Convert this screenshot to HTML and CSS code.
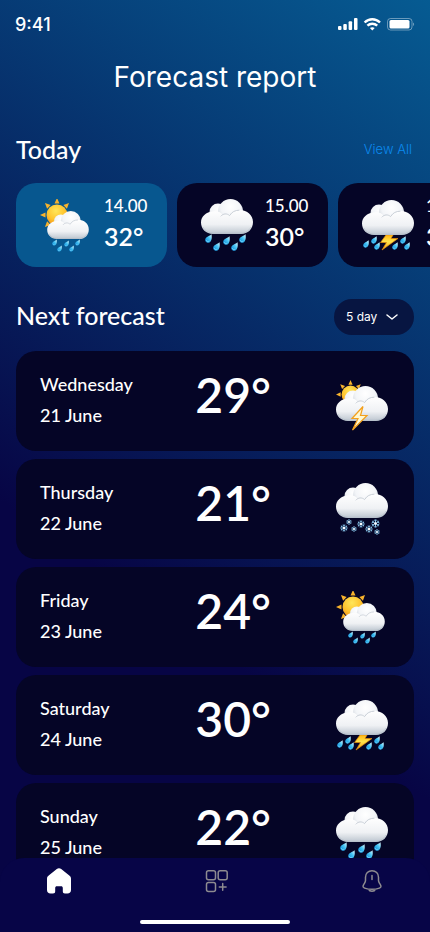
FILE: index.html
```html
<!DOCTYPE html>
<html lang="en">
<head>
<meta charset="utf-8">
<meta name="viewport" content="width=device-width, initial-scale=1">
<title>Forecast report</title>
<link rel="stylesheet" href="styles.css">
</head>
<body>
<svg class="defs" aria-hidden="true">
  <defs>
    <radialGradient id="puff" cx=".5" cy=".3" r=".72">
      <stop offset="0" stop-color="#ffffff"/>
      <stop offset=".55" stop-color="#f3f5f8"/>
      <stop offset="1" stop-color="#c5ccd5"/>
    </radialGradient>
    <linearGradient id="base" x1="0" y1="0" x2="0" y2="1">
      <stop offset="0" stop-color="#ffffff"/>
      <stop offset=".6" stop-color="#eff1f4"/>
      <stop offset="1" stop-color="#bcc5cf"/>
    </linearGradient>
    <linearGradient id="water" x1="1" y1="0" x2="0" y2="1">
      <stop offset="0" stop-color="#e4fbff"/>
      <stop offset=".45" stop-color="#45c3f4"/>
      <stop offset="1" stop-color="#0682d2"/>
    </linearGradient>
    <radialGradient id="sunfill" cx=".45" cy=".3" r=".7">
      <stop offset="0" stop-color="#ffe65a"/>
      <stop offset=".6" stop-color="#ffc42e"/>
      <stop offset="1" stop-color="#f1941d"/>
    </radialGradient>
    <linearGradient id="flash" x1="0" y1="0" x2="0" y2="1">
      <stop offset="0" stop-color="#ffb511"/>
      <stop offset=".45" stop-color="#ffe44b"/>
      <stop offset="1" stop-color="#f39a12"/>
    </linearGradient>
    <symbol id="cloud" viewBox="0 0 52 35">
      <circle cx="17" cy="13" r="8.5" fill="url(#puff)"/>
      <circle cx="29.500" cy="12.500" r="12.500" fill="url(#puff)"/>
      <path d="M12 12.500C16 11.500 20 13 22 16C25 14 28 15 29 16C31 12.500 35 11 39 11C46 11 52 16 52 23C52 30 47 35 40 35H12C5 35 0 30 0 23.500C0 17.500 5 13 12 12.500Z" fill="url(#base)"/>
      <path d="M20 17C22 14.500 26 14 28.500 16.500M29 16C31 12.800 34 11.300 38 11.200" fill="none" stroke="#c3cad2" stroke-width=".9" stroke-linecap="round"/>
      <path d="M2 28C4 32 8 34.300 13 34.300H39C44 34.300 48 32 50 28" fill="none" stroke="#a9b5c1" stroke-width=".8" opacity=".6"/>
    </symbol>
    <symbol id="drop" viewBox="0 0 7 9">
      <path d="M6.500 .2C6.900 3 7 5.300 5.700 7.200C4.600 8.900 2.300 9.300 1 8C-.3 6.700 0 4.600 1.700 3.300C3.300 2.100 5 1.600 6.500 .2Z" fill="url(#water)"/>
      <path d="M1.300 6.300C1.500 7.500 2.700 8 3.700 7.500" fill="none" stroke="#8ee3ff" stroke-width=".8"/>
    </symbol>
    <symbol id="sun" viewBox="0 0 34 34">
      <g fill="#f8b32c">
        <path id="ray" d="M17 0L19.500 5.500H14.500Z"/>
        <use href="#ray" transform="rotate(45 17 17)"/>
        <use href="#ray" transform="rotate(-45 17 17)"/>
        <use href="#ray" transform="rotate(-90 17 17)"/>
        <use href="#ray" transform="rotate(-135 17 17)"/>
      </g>
      <circle cx="17" cy="17" r="10.500" fill="url(#sunfill)"/>
    </symbol>
    <symbol id="flake" viewBox="-5 -5 10 10">
      <path d="M0-4.500V4.500M-3.900-2.200L3.900 2.200M-3.900 2.200L3.900-2.200M-1.500-4L0-2.800L1.500-4M-1.500 4L0 2.800L1.500 4M-4.300-.6L-2.500-1.400L-2.700-3.300M4.300 .6L2.500 1.400L2.700 3.300M-4.300 .6L-2.500 1.400L-2.700 3.300M4.300-.6L2.500-1.400L2.700-3.300" fill="none" stroke="#8fd0f5" stroke-width="1"/>
      <circle r="1.500" fill="#ffffff"/>
    </symbol>
    <symbol id="sun-rain" viewBox="0 0 52 54">
      <use href="#sun" x="0" y="-1" width="34" height="34"/>
      <use href="#cloud" x="7" y="12" width="42" height="28"/>
      <use href="#drop" x="12" y="40" width="5" height="7"/>
      <use href="#drop" x="24" y="41" width="5" height="7"/>
      <use href="#drop" x="35" y="40" width="5" height="7"/>
      <use href="#drop" x="17" y="46" width="5" height="7"/>
      <use href="#drop" x="29" y="46" width="5" height="7"/>
    </symbol>
    <symbol id="rain" viewBox="0 0 52 54">
      <use href="#cloud" width="52" height="35"/>
      <use href="#drop" x="4" y="35" width="7" height="9"/>
      <use href="#drop" x="22" y="37" width="7" height="9"/>
      <use href="#drop" x="38" y="35" width="7" height="9"/>
      <use href="#drop" x="12" y="43" width="7" height="9"/>
      <use href="#drop" x="30" y="43" width="7" height="9"/>
    </symbol>
    <symbol id="storm" viewBox="0 0 52 54">
      <use href="#drop" x="1" y="41" width="6" height="8"/>
      <use href="#drop" x="9" y="37" width="6" height="8"/>
      <use href="#drop" x="12" y="43" width="6" height="8"/>
      <use href="#drop" x="30" y="43" width="6" height="8"/>
      <use href="#drop" x="38" y="37" width="6" height="8"/>
      <use href="#drop" x="42" y="43" width="6" height="8"/>
      <path d="M24 36H31L29 39.500H36L20 51L24.500 43.500H18.500Z" fill="url(#flash)" stroke="#e48b0c" stroke-width=".7"/>
      <use href="#cloud" y="1" width="52" height="35"/>
    </symbol>
    <symbol id="sun-storm" viewBox="0 0 52 56">
      <use href="#sun" x="0" y="5" width="29" height="29"/>
      <use href="#cloud" y="11" width="52" height="35"/>
      <path d="M27 31.500L16 43.500H22L16.500 55L31 40.500H24.500Z" fill="#fff8d2" stroke="#f3a01c" stroke-width="1.200"/>
    </symbol>
    <symbol id="snow" viewBox="0 0 52 54">
      <use href="#cloud" width="52" height="35"/>
      <use href="#flake" x="10" y="36" width="6" height="6"/>
      <use href="#flake" x="21" y="37" width="8" height="8"/>
      <use href="#flake" x="35" y="36" width="9" height="9"/>
      <use href="#flake" x="4" y="41" width="8" height="8"/>
      <use href="#flake" x="15" y="43" width="6" height="6"/>
      <use href="#flake" x="29" y="42" width="8" height="8"/>
      <use href="#flake" x="38" y="46" width="6" height="6"/>
    </symbol>
  </defs>
</svg>

<div class="status">
  <span class="clock">9:41</span>
  <svg class="signals" viewBox="0 0 77 14" aria-hidden="true">
    <g fill="#fff">
      <rect x="0" y="8" width="3.500" height="4" rx="1"/>
      <rect x="5.300" y="6" width="3.500" height="6" rx="1"/>
      <rect x="10.600" y="3.300" width="3.500" height="8.700" rx="1"/>
      <rect x="16" y="0" width="3.500" height="12" rx="1"/>
      <rect x="51.500" y="2" width="20" height="8.500" rx="1.500"/>
      <path d="M34.300 12.500L31.900 10C33.200 8.900 35.400 8.900 36.700 10Z"/>
      <path d="M75 4.500C76.500 5 76.500 7.500 75 8Z" opacity=".4"/>
    </g>
    <g fill="none" stroke="#fff" stroke-width="2.400">
      <path d="M26.600 4.500C31 .2 37.600 .2 42 4.500"/>
      <path d="M29.400 7.700C32.200 5 36.400 5 39.200 7.700"/>
    </g>
    <rect x="49.500" y=".5" width="24.500" height="11.500" rx="3" fill="none" stroke="#fff" opacity=".4"/>
  </svg>
</div>

<main>
  <h1>Forecast report</h1>

  <section>
    <div class="heading">
      <h2>Today</h2>
      <a class="view-all" href="#today">View All</a>
    </div>
    <ul class="hours" id="today">
      <li class="hour current">
        <svg class="weather" viewBox="0 0 52 54" role="img" aria-label="Sun and rain"><use href="#sun-rain"/></svg>
        <div class="reading"><time>14.00</time><strong>32°</strong></div>
      </li>
      <li class="hour">
        <svg class="weather" viewBox="0 0 52 54" role="img" aria-label="Rain"><use href="#rain"/></svg>
        <div class="reading"><time>15.00</time><strong>30°</strong></div>
      </li>
      <li class="hour">
        <svg class="weather" viewBox="0 0 52 54" role="img" aria-label="Thunderstorm"><use href="#storm"/></svg>
        <div class="reading"><time>16.00</time><strong>30°</strong></div>
      </li>
    </ul>
  </section>

  <section class="next">
    <div class="heading">
      <h2>Next forecast</h2>
      <div class="range">
        <select aria-label="Forecast range"><option>5 day</option></select>
        <svg viewBox="0 0 14 8" aria-hidden="true"><path d="M2 2L7 6L12 2"/></svg>
      </div>
    </div>
    <ul class="days">
      <li class="day">
        <div class="date"><span>Wednesday</span><span>21 June</span></div>
        <strong>29°</strong>
        <svg class="weather" viewBox="0 0 52 54" role="img" aria-label="Sun and lightning"><use href="#sun-storm" width="52" height="56"/></svg>
      </li>
      <li class="day">
        <div class="date"><span>Thursday</span><span>22 June</span></div>
        <strong>21°</strong>
        <svg class="weather" viewBox="0 0 52 54" role="img" aria-label="Snow"><use href="#snow"/></svg>
      </li>
      <li class="day">
        <div class="date"><span>Friday</span><span>23 June</span></div>
        <strong>24°</strong>
        <svg class="weather" viewBox="0 0 52 54" role="img" aria-label="Sun and rain"><use href="#sun-rain"/></svg>
      </li>
      <li class="day">
        <div class="date"><span>Saturday</span><span>24 June</span></div>
        <strong>30°</strong>
        <svg class="weather" viewBox="0 0 52 54" role="img" aria-label="Thunderstorm"><use href="#storm"/></svg>
      </li>
      <li class="day">
        <div class="date"><span>Sunday</span><span>25 June</span></div>
        <strong>22°</strong>
        <svg class="weather" viewBox="0 0 52 54" role="img" aria-label="Rain"><use href="#rain"/></svg>
      </li>
    </ul>
  </section>
</main>

<nav class="tabs" aria-label="Main">
  <div class="tab-row">
    <button type="button" aria-label="Home" aria-current="page">
      <svg viewBox="0 0 26 26"><path d="M10.800 1.100C12.100 .1 13.900 .1 15.200 1.100L23.300 7.500C24.400 8.300 25 9.300 25 10.700V22C25 24.200 23.700 25.500 21.500 25.500H19C17.500 25.500 16.800 24.700 16.800 23.300V20.300C16.800 18.900 16.200 18.300 15 18.300H11C9.800 18.300 9.200 18.900 9.200 20.300V23.300C9.200 24.700 8.500 25.500 7 25.500H4.500C2.300 25.500 1 24.200 1 22V10.700C1 9.300 1.600 8.300 2.700 7.500Z" fill="#fff"/></svg>
    </button>
    <button type="button" aria-label="Widgets">
      <svg class="line" viewBox="0 0 26 26"><rect x="3.500" y="2.700" width="9" height="9" rx="2"/><rect x="15.200" y="2.700" width="9" height="9" rx="2"/><rect x="3.500" y="14.400" width="9" height="9" rx="2"/><path d="M19.700 15.500V22.300M16.300 18.900H23.100"/></svg>
    </button>
    <button type="button" aria-label="Notifications">
      <svg class="line" viewBox="0 0 26 26"><path d="M13 7.500V11.500M13 2.700C9.200 2.700 6.500 5.500 6.500 9.300V12.500C6.500 13.600 5.900 14.500 5.300 15.500L4.400 17.200C3.600 18.700 4.200 19.600 5.600 20.100C10.400 21.700 15.600 21.700 20.400 20.100C21.800 19.600 22.400 18.700 21.600 17.200L20.700 15.500C20.100 14.500 19.500 13.600 19.500 12.500V9.300C19.500 5.500 16.800 2.700 13 2.700ZM9.800 21.300C10.500 23.900 15.500 23.900 16.200 21.300"/></svg>
    </button>
  </div>
  <div class="home-bar"></div>
</nav>
</body>
</html>
```
FILE: styles.css
```css
* {
  box-sizing: border-box;
}

body {
  margin: 0;
  min-height: 100vh;
  overflow-x: hidden;
  background: linear-gradient(215deg, #065b92 0%, #070545 65%) fixed;
  color: #fff;
  font-family: Lato, "Liberation Sans", sans-serif;
  font-weight: 500;
}

h1,
h2,
ul {
  margin: 0;
  padding: 0;
  font-weight: inherit;
  list-style: none;
}

strong {
  font-weight: 600;
}

.defs {
  position: absolute;
  width: 0;
  height: 0;
}

.status {
  display: flex;
  align-items: center;
  justify-content: space-between;
  height: 50px;
  padding: 0 15px;
}

.clock {
  font: 500 18px/24px Inter, sans-serif;
}

.signals {
  width: 77px;
  height: 14px;
}

main {
  padding: 0 16px;
}

h1 {
  padding-top: 7px;
  font: 400 28px/40px Inter, sans-serif;
  font-optical-sizing: none;
  text-align: center;
}

section {
  padding-top: 32px;
}

.heading {
  display: flex;
  align-items: center;
  justify-content: space-between;
  height: 40px;
}

.next .heading {
  align-items: start;
  height: 36px;
}

h2 {
  font-size: 25px;
  line-height: 32px;
}

.view-all {
  padding: 0 2px;
  color: #0b8aee;
  font: 300 13px/20px Inter, sans-serif;
  text-decoration: none;
}

.hours {
  display: flex;
  gap: 10px;
  margin: 14px -16px 0 0;
  overflow: hidden;
}

.hour {
  display: flex;
  flex: 0 0 151px;
  gap: 12px;
  height: 84px;
  padding: 16px 0 0 24px;
  border-radius: 20px;
  background: #050526;
}

.current {
  background: #07578f;
}

.weather {
  flex: none;
  width: 52px;
  height: 54px;
  overflow: visible;
}

.reading {
  display: grid;
  align-content: start;
}

.reading time {
  font-size: 17px;
  line-height: 14px;
}

.reading strong {
  font-size: 25px;
  line-height: 46px;
}

.range {
  display: grid;
  align-items: center;
  width: 80px;
}

.range select,
.range svg {
  grid-area: 1 / 1;
}

.range select {
  width: 100%;
  height: 36px;
  padding: 0 12px;
  border: 0;
  border-radius: 18px;
  appearance: none;
  background: #071541;
  color: #fff;
  font: 400 12px/16px Inter, sans-serif;
}

.range svg {
  justify-self: end;
  width: 14px;
  height: 8px;
  margin-right: 15px;
  fill: none;
  stroke: #fff;
  stroke-width: 1.5;
  stroke-linecap: round;
  stroke-linejoin: round;
  pointer-events: none;
}

.days {
  display: grid;
  gap: 8px;
  margin-top: 16px;
}

.day {
  display: grid;
  grid-template-columns: 4fr 80px 3fr;
  height: 100px;
  padding: 0 26px 0 24px;
  border-radius: 20px;
  background: #050526;
}

.date {
  display: grid;
  align-content: start;
  padding-top: 18px;
  font-size: 18px;
  line-height: 31px;
}

.day > strong {
  font-size: 48px;
  line-height: 88px;
  text-align: center;
}

.day .weather {
  justify-self: end;
  margin-top: 24px;
}

.tabs {
  position: fixed;
  inset: auto 0 0;
  height: 74px;
  border-radius: 24px 24px 0 0;
  background: #070547;
}

.tab-row {
  display: flex;
  justify-content: space-between;
  padding: 10px 45px 0 46px;
}

.tabs button {
  width: 26px;
  height: 26px;
  padding: 0;
  border: 0;
  background: none;
}

.tabs svg {
  display: block;
  width: 26px;
  height: 26px;
}

.line {
  fill: none;
  stroke: #8d8b90;
  stroke-width: 1.5;
  stroke-linecap: round;
  stroke-linejoin: round;
}

.home-bar {
  width: 150px;
  height: 4px;
  margin: 26px auto 0;
  border-radius: 2px;
  background: #fff;
}
```
